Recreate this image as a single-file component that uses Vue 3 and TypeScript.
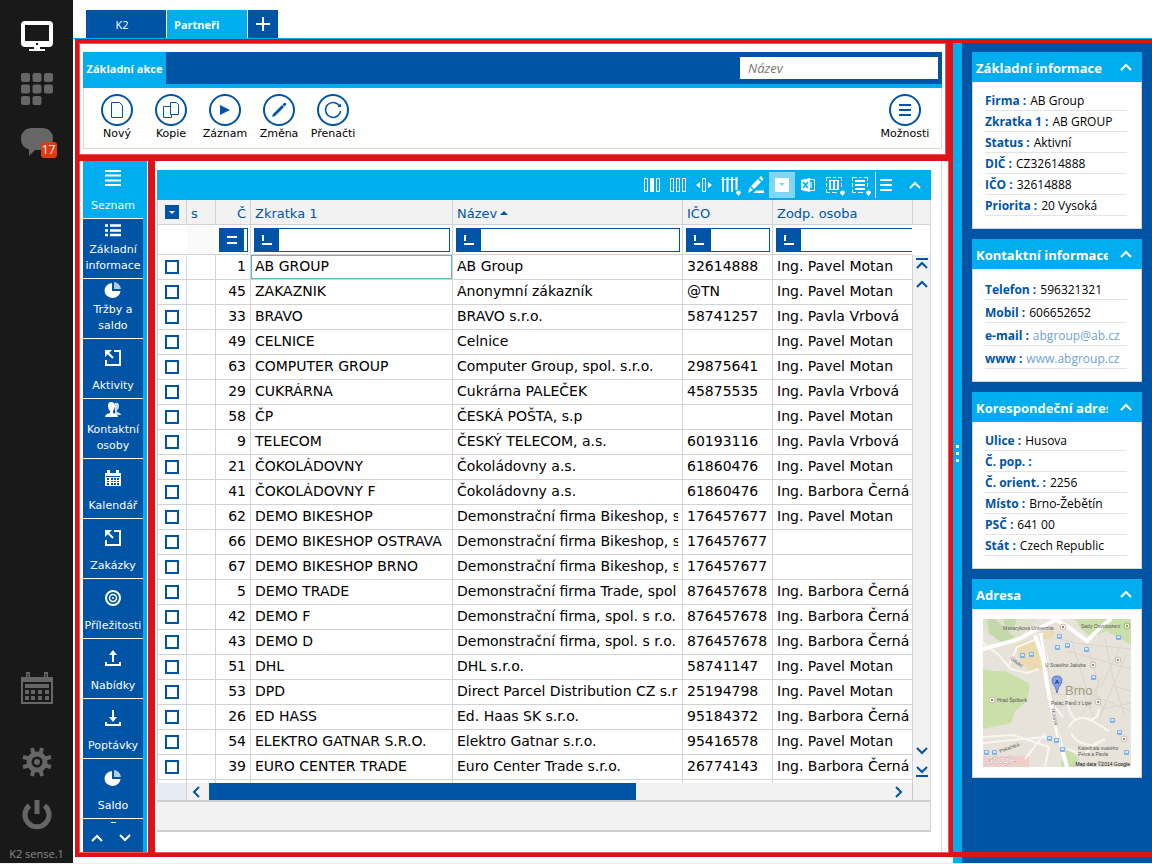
<script setup lang="ts">
import { h, ref } from 'vue'

interface Shape { d: string; w?: number; fill?: boolean; o?: number; c?: string }

const glyphs: Record<string, { size: [number, number]; shapes: Shape[] }> = {
  monitor: { size: [32, 31], shapes: [
    { d: 'M4 0H28Q32 0 32 4V22Q32 26 28 26H4Q0 26 0 22V4Q0 0 4 0ZM4 4V20H28V4ZM15 22V24H17V22ZM13 26H19V28H24V30H8V28H13Z', fill: true } ] },
  apps: { size: [32, 32], shapes: [
    { d: 'M2 0H7Q9 0 9 2V7Q9 9 7 9H2Q0 9 0 7V2Q0 0 2 0ZM13.500 0H18.500Q20.500 0 20.500 2V7Q20.500 9 18.500 9H13.500Q11.500 9 11.500 7V2Q11.500 0 13.500 0ZM25 0H30Q32 0 32 2V7Q32 9 30 9H25Q23 9 23 7V2Q23 0 25 0ZM2 11.500H7Q9 11.500 9 13.500V18.500Q9 20.500 7 20.500H2Q0 20.500 0 18.500V13.500Q0 11.500 2 11.500ZM13.500 11.500H18.500Q20.500 11.500 20.500 13.500V18.500Q20.500 20.500 18.500 20.500H13.500Q11.500 20.500 11.500 18.500V13.500Q11.500 11.500 13.500 11.500ZM25 11.500H30Q32 11.500 32 13.500V18.500Q32 20.500 30 20.500H25Q23 20.500 23 18.500V13.500Q23 11.500 25 11.500ZM2 23H7Q9 23 9 25V30Q9 32 7 32H2Q0 32 0 30V25Q0 23 2 23ZM13.500 23H18.500Q20.500 23 20.500 25V30Q20.500 32 18.500 32H13.500Q11.500 32 11.500 30V25Q11.500 23 13.500 23Z', fill: true } ] },
  chat: { size: [32, 28], shapes: [
    { d: 'M10 0H22Q32 1 32 11Q32 21 22 22H14L8 28V21.500Q0 19 0 11Q0 1 10 0Z', fill: true } ] },
  bigCalendar: { size: [32, 32], shapes: [
    { d: 'M1 6H31V31H1Z', w: 2 },
    { d: 'M0 5H32V10H0ZM4 12H28V16H4ZM4 18H8V22H4ZM10 18H14V22H10ZM17 18H21V22H17ZM24 18H28V22H24ZM4 24H8V28H4ZM10 24H14V28H10ZM17 24H21V28H17ZM24 24H28V28H24Z', fill: true },
    { d: 'M5 0H9V6H5ZM23 0H27V6H23Z', fill: true },
    { d: 'M7 2V5M25 2V5', w: 1, c: '#191919' } ] },
  gear: { size: [32, 32], shapes: [
    { d: 'M16 8A8 8 0 1 0 16 24A8 8 0 1 0 16 8', w: 5 },
    { d: 'M12.500 8L11 2M19.500 8L21 2M24 12.500L30 11M24 19.500L30 21M19.500 24L21 30M12.500 24L11 30M8 19.500L2 21M8 12.500L2 11', w: 4 },
    { d: 'M16 13A3 3 0 1 0 16 19A3 3 0 1 0 16 13', fill: true } ] },
  power: { size: [30, 32], shapes: [
    { d: 'M15 1V15', w: 5 }, { d: 'M7.500 6.500A12 12 0 1 0 22.500 6.500', w: 5 } ] },
  list: { size: [16, 16], shapes: [
    { d: 'M0 1H16M0 5.500H16M0 10.500H16M0 15H16', w: 2 } ] },
  bullets: { size: [16, 16], shapes: [
    { d: 'M0 3.500H3M0 8.500H3M0 13H3M5 3.500H16M5 8.500H16M5 13H16', w: 2.5 } ] },
  pie: { size: [16, 16], shapes: [
    { d: 'M7 1V9H15.500A8 7.500 0 1 1 7 1Z', fill: true },
    { d: 'M9 0Q15 1 16 7H9Z', fill: true, o: 0.7 } ] },
  launch: { size: [16, 16], shapes: [
    { d: 'M9 1H15V15H1V10M2 2L8 8', w: 2 }, { d: 'M0 0H7L0 7Z', fill: true } ] },
  people: { size: [16, 16], shapes: [
    { d: 'M10 1Q14 0 14 4Q14 7 12 8V10Q16 11 16 13H10Z', fill: true, o: 0.8 },
    { d: 'M6 0Q10 0 10 4Q10 7 8 9V11Q13 12 13 15H0Q0 12 5 11V9Q3 7 3 4Q3 0 6 0Z', fill: true } ] },
  calendar: { size: [16, 16], shapes: [
    { d: 'M0 3H2V0H5V3H11V0H14V3H16V16H0ZM1 6V7H15V6ZM2 8V10H4V8ZM6 8V10H8V8ZM9 8V10H11V8ZM12 8V10H14V8ZM2 11V12H4V11ZM6 11V12H8V11ZM9 11V12H11V11ZM12 11V12H14V11ZM2 13V15H4V13ZM6 13V15H8V13ZM9 13V15H11V13ZM12 13V15H14V13Z', fill: true } ] },
  target: { size: [16, 16], shapes: [
    { d: 'M8 1A7 7 0 1 0 8 15A7 7 0 1 0 8 1', w: 2 },
    { d: 'M8 4.500A3.500 3.500 0 1 0 8 11.500A3.500 3.500 0 1 0 8 4.500', w: 1.5 },
    { d: 'M8 7A1 1 0 1 0 8 9A1 1 0 1 0 8 7', fill: true } ] },
  upload: { size: [16, 16], shapes: [
    { d: 'M1 12V15H15V12M8 12V3', w: 2 }, { d: 'M8 0L12 5H4Z', fill: true } ] },
  download: { size: [16, 16], shapes: [
    { d: 'M1 12V15H15V12M8 0V8', w: 2 }, { d: 'M8 12L12 7H4Z', fill: true } ] },
  up: { size: [12, 8], shapes: [{ d: 'M1 7L6 2L11 7', w: 2 }] },
  down: { size: [12, 8], shapes: [{ d: 'M1 1L6 6L11 1', w: 2 }] },
  left: { size: [8, 12], shapes: [{ d: 'M7 1L2 6L7 11', w: 2 }] },
  right: { size: [8, 12], shapes: [{ d: 'M1 1L6 6L1 11', w: 2 }] },
  top: { size: [12, 12], shapes: [{ d: 'M0 1H12M1 10L6 5L11 10', w: 2 }] },
  bottom: { size: [12, 12], shapes: [{ d: 'M0 11H12M1 2L6 7L11 2', w: 2 }] },
  plus: { size: [14, 14], shapes: [{ d: 'M7 0V14M0 7H14', w: 2 }] },
  page: { size: [32, 32], shapes: [{ d: 'M10.500 8.500H18.500L21.500 11.500V23.500H10.500Z', w: 1 }] },
  copy: { size: [32, 32], shapes: [
    { d: 'M15.500 20.500V8.500H21.500L23.500 10.500V20.500ZM15.500 12.500H8.500V23.500H16.500V20.500', w: 1 } ] },
  play: { size: [32, 32], shapes: [{ d: 'M11 11L21 16L11 21Z', fill: true }] },
  pencil: { size: [32, 32], shapes: [{ d: 'M9 23L10 20L19 11L21 13L12 22ZM19.500 10.500L21 9H23V11L21.500 12.500Z', fill: true }] },
  reload: { size: [32, 32], shapes: [{ d: 'M22.500 12A7.500 7.500 0 1 0 23.500 17', w: 1.5 }, { d: 'M24 9.500V13H20.500Z', fill: true }] },
  menu: { size: [12, 12], shapes: [{ d: 'M0 1H12M0 6H12M0 11H12', w: 2 }] },
  starts: { size: [12, 12], shapes: [{ d: 'M2 1V7M1 10H11', w: 2 }] },
  equals: { size: [12, 12], shapes: [{ d: 'M1 3H11M1 9H11', w: 2 }] },
  caret: { size: [6, 3], shapes: [{ d: 'M0 0H6L3 3Z', fill: true }] },
  sort: { size: [8, 4], shapes: [{ d: 'M0 4L4 0L8 4Z', fill: true }] },
  cols1: { size: [20, 20], shapes: [
    { d: 'M2.500 3.500H5.500V16.500H2.500ZM14.500 3.500H17.500V16.500H14.500Z', w: 1 }, { d: 'M8 3H12V17H8Z', fill: true } ] },
  cols2: { size: [20, 20], shapes: [
    { d: 'M2.500 3.500H5.500V16.500H2.500ZM8.500 3.500H11.500V16.500H8.500ZM14.500 3.500H17.500V16.500H14.500Z', w: 1 } ] },
  fit: { size: [20, 20], shapes: [
    { d: 'M8.500 3.500H11.500V16.500H8.500Z', w: 1 }, { d: 'M6 7V13L2 10ZM14 7V13L18 10Z', fill: true } ] },
  rake: { size: [20, 20], shapes: [
    { d: 'M1 4.500H18', w: 1 }, { d: 'M3 2V17M7.500 2V17M12 2V17M16.500 2V15', w: 2 },
    { d: 'M16 18A2.500 2.500 0 1 1 21 18L18.500 21Z', fill: true } ] },
  edit: { size: [20, 20], shapes: [
    { d: 'M2 18L4 12L7 15ZM5 11L12 4L15 7L8 14ZM13 3L15 1L17.500 4L16 6ZM10 15.500H18V18H7.500Z', fill: true } ] },
  toggle: { size: [20, 20], shapes: [
    { d: 'M3 3H17V17H3Z', fill: true }, { d: 'M7 8H13L10 11Z', fill: true, c: '#80d6f7' } ] },
  excel: { size: [20, 20], shapes: [
    { d: 'M3 5L12 3V17L3 15Z', fill: true }, { d: 'M5 7L10 13M10 7L5 13', w: 1.5, c: '#00adef' },
    { d: 'M12 4.500H16.500V15.500H12', w: 1 }, { d: 'M12 7H14V13H12Z', fill: true, o: 0.6 } ] },
  selCols: { size: [20, 20], shapes: [
    { d: 'M2.500 6V2.500H7M9 2.500H12M14 2.500H17.500V6M17.500 8V12M2.500 8V12M2.500 14V17.500H6M8 17.500H13', w: 1 },
    { d: 'M6 6V15M10 6V15M14 6V15', w: 2 }, { d: 'M5 5.500H15M5 14.500H15', w: 1 }, { d: 'M16 18A2.500 2.500 0 1 1 21 18L18.500 21Z', fill: true } ] },
  selRows: { size: [20, 20], shapes: [
    { d: 'M2.500 6V2.500H7M9 2.500H12M14 2.500H17.500V6M17.500 8V12M2.500 8V12M2.500 14V17.500H6M8 17.500H13', w: 1 },
    { d: 'M5 6H15M5 10H15M5 14H15', w: 2 }, { d: 'M16 18A2.500 2.500 0 1 1 21 18L18.500 21Z', fill: true } ] },
}

const Glyph = (props: { name: string }) => {
  const g = glyphs[props.name]
  return h('svg', { width: g.size[0], height: g.size[1], viewBox: `0 0 ${g.size[0]} ${g.size[1]}`, class: 'glyph', 'aria-hidden': 'true' },
    g.shapes.map(s => h('path', s.fill
      ? { d: s.d, fill: s.c ?? 'currentColor', 'fill-rule': 'evenodd', opacity: s.o ?? 1 }
      : { d: s.d, fill: 'none', stroke: s.c ?? 'currentColor', 'stroke-width': s.w })))
}
Glyph.props = ['name']

const actions = [
  { icon: 'page', label: 'Nový' }, { icon: 'copy', label: 'Kopie' }, { icon: 'play', label: 'Záznam' },
  { icon: 'pencil', label: 'Změna' }, { icon: 'reload', label: 'Přenačti' },
]

const pages = [
  { icon: 'list', lines: ['Seznam'] }, { icon: 'bullets', lines: ['Základní', 'informace'] },
  { icon: 'pie', lines: ['Tržby a', 'saldo'] }, { icon: 'launch', lines: ['Aktivity'] },
  { icon: 'people', lines: ['Kontaktní', 'osoby'] }, { icon: 'calendar', lines: ['Kalendář'] },
  { icon: 'launch', lines: ['Zakázky'] }, { icon: 'target', lines: ['Příležitosti'] },
  { icon: 'upload', lines: ['Nabídky'] }, { icon: 'download', lines: ['Poptávky'] }, { icon: 'pie', lines: ['Saldo'] },
]

const tools = ['cols1', 'cols2', 'fit', 'rake', 'edit', 'toggle', 'excel', 'selCols', 'selRows']

const P = 'Ing. Pavel Motan'
const V = 'Ing. Pavla Vrbová'
const B = 'Ing. Barbora Černá'
const rows: [number, string, string, string, string][] = [
  [1, 'AB GROUP', 'AB Group', '32614888', P],
  [45, 'ZAKAZNIK', 'Anonymní zákazník', '@TN', P],
  [33, 'BRAVO', 'BRAVO s.r.o.', '58741257', V],
  [49, 'CELNICE', 'Celnice', '', P],
  [63, 'COMPUTER GROUP', 'Computer Group, spol. s.r.o.', '29875641', P],
  [29, 'CUKRÁRNA', 'Cukrárna PALEČEK', '45875535', V],
  [58, 'ČP', 'ČESKÁ POŠTA, s.p', '', P],
  [9, 'TELECOM', 'ČESKÝ TELECOM, a.s.', '60193116', V],
  [21, 'ČOKOLÁDOVNY', 'Čokoládovny a.s.', '61860476', P],
  [41, 'ČOKOLÁDOVNY F', 'Čokoládovny a.s.', '61860476', B],
  [62, 'DEMO BIKESHOP', 'Demonstrační firma Bikeshop, s', '176457677', P],
  [66, 'DEMO BIKESHOP OSTRAVA', 'Demonstrační firma Bikeshop, s', '176457677', ''],
  [67, 'DEMO BIKESHOP BRNO', 'Demonstrační firma Bikeshop, s', '176457677', ''],
  [5, 'DEMO TRADE', 'Demonstrační firma Trade, spol', '876457678', B],
  [42, 'DEMO F', 'Demonstrační firma, spol. s r.o.', '876457678', B],
  [43, 'DEMO D', 'Demonstrační firma, spol. s r.o.', '876457678', B],
  [51, 'DHL', 'DHL s.r.o.', '58741147', P],
  [53, 'DPD', 'Direct Parcel Distribution CZ s.r', '25194798', P],
  [26, 'ED HASS', 'Ed. Haas SK s.r.o.', '95184372', B],
  [54, 'ELEKTRO GATNAR S.R.O.', 'Elektro Gatnar s.r.o.', '95416578', P],
  [39, 'EURO CENTER TRADE', 'Euro Center Trade s.r.o.', '26774143', B],
]
const scroll = ref({ start: 0, length: 63 })

const cards: { title: string; roomy?: boolean; items: { k: string; v: string; href?: string }[] }[] = [
  { title: 'Základní informace', items: [
    { k: 'Firma', v: 'AB Group' }, { k: 'Zkratka 1', v: 'AB GROUP' }, { k: 'Status', v: 'Aktivní' },
    { k: 'DIČ', v: 'CZ32614888' }, { k: 'IČO', v: '32614888' }, { k: 'Priorita', v: '20 Vysoká' } ] },
  { title: 'Kontaktní informace', roomy: true, items: [
    { k: 'Telefon', v: '596321321' }, { k: 'Mobil', v: '606652652' },
    { k: 'e-mail', v: 'abgroup@ab.cz', href: 'mailto:abgroup@ab.cz' },
    { k: 'www', v: 'www.abgroup.cz', href: 'http://www.abgroup.cz' } ] },
  { title: 'Korespondeční adresa', items: [
    { k: 'Ulice', v: 'Husova' }, { k: 'Č. pop.', v: '' }, { k: 'Č. orient.', v: '2256' },
    { k: 'Místo', v: 'Brno-Žebětín' }, { k: 'PSČ', v: '641 00' }, { k: 'Stát', v: 'Czech Republic' } ] },
]

const stops = [[76, 17], [74, 28], [84, 26], [103, 30], [39, 36], [48, 35], [110, 58], [135, 18], [129, 101], [136, 113], [66, 119], [73, 121], [3, 133], [11, 133], [79, 130], [143, 133]]
const places = [[80, 8], [110, 46], [9, 81], [115, 83], [135, 41], [141, 120]]
</script>

<template>
  <div class="app">
    <nav class="rail" aria-label="Hlavní panel">
      <button class="rail-btn on" aria-label="Plocha"><Glyph name="monitor" /></button>
      <button class="rail-btn apps" aria-label="Aplikace"><Glyph name="apps" /></button>
      <button class="rail-btn chat" aria-label="Zprávy"><Glyph name="chat" /><span class="badge">17</span></button>
      <div class="rail-end">
        <button class="rail-btn" aria-label="Kalendář"><Glyph name="bigCalendar" /></button>
        <button class="rail-btn gear" aria-label="Nastavení"><Glyph name="gear" /></button>
        <button class="rail-btn power" aria-label="Konec"><Glyph name="power" /></button>
        <div class="version">K2 sense.1</div>
      </div>
    </nav>

    <div class="main">
      <header class="tabs">
        <button class="tab">K2</button>
        <button class="tab current">Partneři</button>
        <button class="tab add" aria-label="Nová záložka"><Glyph name="plus" /></button>
      </header>

      <div class="workspace">
        <section class="ribbon-frame">
          <div class="ribbon">
            <div class="ribbon-head">
              <button class="ribbon-tab">Základní akce</button>
              <input class="search" type="text" placeholder="Název" aria-label="Název" />
            </div>
            <div class="ribbon-body">
              <button v-for="a in actions" :key="a.label" class="action">
                <span class="circle"><Glyph :name="a.icon" /></span>{{ a.label }}
              </button>
              <button class="action last"><span class="circle"><Glyph name="menu" /></span>Možnosti</button>
            </div>
          </div>
        </section>

        <section class="pages-frame">
          <div class="pages">
            <div class="page-list">
              <button v-for="(p, i) in pages" :key="i" class="page" :class="{ active: i === 0, double: p.lines.length > 1 }">
                <Glyph :name="p.icon" />
                <span class="page-label"><span v-for="l in p.lines" :key="l">{{ l }}</span></span>
              </button>
              <div class="page-more"></div>
            </div>
            <div class="page-scroll">
              <button aria-label="Nahoru"><Glyph name="up" /></button>
              <button aria-label="Dolů"><Glyph name="down" /></button>
            </div>
          </div>
        </section>

        <section class="grid-frame">
          <div class="grid-panel">
            <div class="grid">
              <div class="toolbar">
                <button v-for="t in tools" :key="t" class="tool" :class="{ pressed: t === 'toggle' }" :aria-label="t"><Glyph :name="t" /></button>
                <button class="tool divided" aria-label="Menu"><Glyph name="menu" /></button>
                <button class="tool collapse" aria-label="Sbalit"><Glyph name="up" /></button>
              </div>
              <div class="table-area">
                <div class="table-clip">
                  <table>
                    <colgroup>
                      <col class="c-check" /><col class="c-s" /><col class="c-no" /><col class="c-code" /><col class="c-name" /><col class="c-id" /><col />
                    </colgroup>
                    <thead>
                      <tr class="head">
                        <th><button class="drop" aria-label="Výběr"><Glyph name="caret" /></button></th>
                        <th>s</th><th class="num">Č</th><th>Zkratka 1</th>
                        <th>Název <Glyph name="sort" /></th><th>IČO</th><th>Zodp. osoba</th>
                      </tr>
                      <tr class="filters">
                        <td></td><td class="shade"></td>
                        <td v-for="(f, i) in ['Č', 'Zkratka 1', 'Název', 'IČO', 'Zodp. osoba']" :key="f">
                          <div class="filter" :class="{ open: i === 4 }">
                            <button :aria-label="'Podmínka ' + f"><Glyph :name="i ? 'starts' : 'equals'" /></button>
                            <input type="text" :aria-label="'Filtr ' + f" />
                          </div>
                        </td>
                      </tr>
                    </thead>
                    <tbody>
                      <tr v-for="(r, i) in rows" :key="r[0]">
                        <td><input type="checkbox" class="tick" :aria-label="r[1]" /></td>
                        <td></td>
                        <td class="num"><div>{{ r[0] }}</div></td>
                        <td :class="{ focus: i === 0 }"><div>{{ r[1] }}</div></td>
                        <td><div>{{ r[2] }}</div></td>
                        <td><div>{{ r[3] }}</div></td>
                        <td class="wide"><div>{{ r[4] }}</div></td>
                      </tr>
                      <tr><td v-for="n in 7" :key="n"></td></tr>
                    </tbody>
                  </table>
                </div>
                <div class="vside">
                  <div class="vhead"></div>
                  <div class="vfilter"></div>
                  <div class="vbar">
                    <button aria-label="Začátek"><Glyph name="top" /></button>
                    <button aria-label="Výš"><Glyph name="up" /></button>
                    <button class="push" aria-label="Níž"><Glyph name="down" /></button>
                    <button aria-label="Konec"><Glyph name="bottom" /></button>
                  </div>
                </div>
              </div>
              <div class="hbar">
                <div class="hcorner"></div>
                <button aria-label="Vlevo"><Glyph name="left" /></button>
                <div class="track"><div class="thumb" :style="{ width: scroll.length + '%' }"></div></div>
                <button class="to-right" aria-label="Vpravo"><Glyph name="right" /></button>
                <div class="hend"></div>
              </div>
              <div class="status"></div>
            </div>
          </div>
        </section>
      </div>

      <div class="strip"><i></i><i></i><i></i></div>

      <aside class="side">
        <div class="side-body">
          <section v-for="c in cards" :key="c.title" class="card">
            <header><h2>{{ c.title }}</h2><button :aria-label="'Sbalit ' + c.title"><Glyph name="up" /></button></header>
            <dl :class="{ roomy: c.roomy }">
              <div v-for="it in c.items" :key="it.k">
                <dt>{{ it.k }} :</dt>
                <dd><a v-if="it.href" :href="it.href">{{ it.v }}</a><template v-else>{{ it.v }}</template></dd>
              </div>
            </dl>
          </section>
          <section class="card">
            <header><h2>Adresa</h2><button aria-label="Sbalit Adresa"><Glyph name="up" /></button></header>
            <div class="map">
              <svg width="148" height="148" viewBox="0 0 148 148" role="img" aria-label="Brno">
                <rect width="148" height="148" fill="#e8e3da" />
                <path d="M0 0H54L30 24L20 26L0 10Z" fill="#dde2cc" />
                <path d="M4 0H12L32 18L22 26L6 14Z" fill="#c3d9ac" />
                <path d="M20 0H34L30 10L22 6Z" fill="#c3d9ac" />
                <path d="M0 50Q12 53 22 52L46 64Q47 76 42 84L32 92L28 104L0 110Z" fill="#cadfaa" />
                <path d="M92 0H148V26L124 12L108 18L98 10Z" fill="#cadfaa" />
                <path d="M80 134L86 130L96 140L92 148H78Z" fill="#cadfaa" />
                <path d="M34 24L52 20L58 40L65 44L62 50L46 52L36 40Z" fill="#eadbb0" />
                <path d="M58 12H72L68 20H58Z" fill="#eadbb0" />
                <path d="M0 137H46V148H0Z" fill="#f0cfca" />
                <g fill="none" stroke="#dad5ca" stroke-width="1">
                  <path d="M84 32L148 50M76 62L148 92M88 20L104 72M102 18L116 66L106 90M122 20L130 60L142 98M138 26L118 68M96 66L112 100M118 60L98 96M62 74L86 76M66 90L98 82M78 20L92 24L148 30M128 66L148 72M112 70L120 90L148 84M144 34L128 72L116 100" />
                </g>
                <g fill="none" stroke="#f8f6f1" stroke-width="2">
                  <path d="M0 24L16 36L28 50L44 54L56 50M54 20L34 28L26 46M0 118L30 116L66 128M0 124L40 120L64 118M42 140L62 114M66 128L62 148M84 130L100 136L116 124M70 86L80 98M86 74Q82 90 92 100M86 108Q92 96 106 100L126 112M88 114Q94 126 110 126L122 120M106 102L114 98L116 90" />
                </g>
                <g fill="none" stroke="#fff" stroke-width="4">
                  <path d="M0 30L36 20L74 0M52 16L60 40L66 76L74 112L84 148M72 0L88 10L104 22L116 10L128 0" />
                  <path d="M58 14L64 46" />
                </g>
                <path d="M60 16L68 68L78 128" fill="none" stroke="#ddd6c9" stroke-width="1" />
                <g v-for="(s, i) in stops" :key="'s' + i">
                  <rect :x="s[0] - 2" :y="s[1] - 2" width="5" height="5" rx="1" fill="#7db3ea" />
                  <rect :x="s[0] - 1" :y="s[1] - 1" width="3" height="2" fill="#d6e7fa" />
                </g>
                <g v-for="(p, i) in places" :key="'p' + i">
                  <circle :cx="p[0]" :cy="p[1]" r="3" fill="#f7f3ee" stroke="#c9bdb2" stroke-width="1" />
                  <circle :cx="p[0]" :cy="p[1]" r="1" fill="#8a5a40" />
                </g>
                <circle cx="144" cy="7" r="3" fill="#eef6dd" stroke="#98ab78" /><circle cx="144" cy="7" r="1" fill="#4aa000" />
                <path d="M74 74Q73 68 70 65Q67 57 74 57Q81 57 78 65Q75 68 74 74Z" fill="#7f9fef" stroke="#5a78c4" stroke-width="1" />
                <text x="72" y="65" class="pin">A</text>
                <g class="labels">
                  <text x="20" y="11">Masarykova Univerzita</text>
                  <text x="98" y="9">Sady Osvobození</text>
                  <text x="62" y="48">U Svatého Jakuba</text>
                  <text x="14" y="83">Hrad Špilberk</text>
                  <text x="68" y="86">Palác Pánů z Lipé</text>
                  <text x="95" y="131">Katedrála svatého</text>
                  <text x="95" y="137">Petra a Pavla</text>
                  <text transform="translate(27 40) rotate(38)">Údolní</text>
                  <text transform="translate(68 90) rotate(78)">Husova</text>
                  <text transform="translate(17 134) rotate(-20)">Pekařská</text>
                </g>
                <text x="82" y="76" class="town">Brno</text>
                <text x="3" y="144" class="brand">Google</text>
                <text x="147" y="147" class="credit">Map data ©2014 Google</text>
              </svg>
            </div>
          </section>
        </div>
      </aside>
    </div>
  </div>
</template>

<style>
body { margin: 0; }
</style>

<style scoped>
.app {
  --blue: #0054a6;
  --cyan: #00adef;
  --red: #df1218;
  --red-soft: #e8575b;
  --line: #d0d3d6;
  --grey: #f2f2f2;
  display: grid;
  grid-template-columns: 73px minmax(0, 1fr);
  grid-template-rows: minmax(0, 1fr);
  height: 100vh;
  min-height: 640px;
  box-sizing: border-box;
  border-bottom: 1px solid #eee;
  background: #fff;
  font-family: "DejaVu Sans", sans-serif;
  font-size: 11px;
}
.app *, .app *::before { box-sizing: border-box; }
button { border: 0; padding: 0; margin: 0; background: none; font: inherit; color: inherit; cursor: pointer; }
.glyph { display: block; flex: none; overflow: visible; }

/* left rail */
.rail { background: #191919; display: flex; flex-direction: column; align-items: center; padding-top: 21px; color: #666; }
.rail-btn { display: block; }
.rail-btn.on { color: #fff; }
.rail-btn.apps { margin-top: 21px; }
.rail-btn.chat { margin-top: 23px; position: relative; }
.badge { position: absolute; left: 20px; top: 14px; width: 16px; height: 16px; border-radius: 3px; background: #df3a10; color: #fff; font: 12px/16px "Open Sans", sans-serif; text-align: center; }
.rail-end { margin-top: auto; display: flex; flex-direction: column; align-items: center; }
.gear { margin-top: 42px; }
.power { margin-top: 21px; }
.version { margin-top: 14px; height: 18px; font: 11px/18px "Open Sans", sans-serif; color: #8a8a8a; }

/* main layout */
.main { display: grid; grid-template-columns: minmax(0, 1fr) 9px 190px; grid-template-rows: 39px minmax(0, 1fr); }
.tabs { grid-column: 1 / -1; display: flex; align-items: flex-end; gap: 1px; padding-left: 13px; border-bottom: 1px solid var(--cyan); font-family: "Open Sans", sans-serif; }
.tab { width: 80px; height: 28px; padding-right: 8px; background: var(--blue); color: #fff; text-align: center; }
.tab.current { background: var(--cyan); font-weight: 700; text-align: left; padding-left: 7px; }
.tab.add { width: 30px; padding: 0; display: grid; place-items: center; }

.workspace { display: grid; grid-template-columns: 80px minmax(0, 1fr); grid-template-rows: 122px minmax(0, 1fr); margin: 0 0 6px 2px; }
.ribbon-frame { grid-column: 1 / -1; border: solid var(--red); border-width: 4px 7px 6px 4px; box-shadow: inset 0 0 0 1px var(--red-soft); padding: 9px 4px 5px; }
.ribbon { height: 97px; }
.ribbon-head { display: flex; justify-content: space-between; align-items: flex-start; height: 36px; background: var(--blue); border-bottom: 4px solid var(--cyan); }
.ribbon-tab { width: 83px; height: 32px; background: var(--cyan); color: #fff; font: 700 11px "Open Sans", sans-serif; white-space: nowrap; }
.search { width: 198px; height: 22px; margin: 5px 4px 0 0; border: 0; padding: 0 8px; background: #fff; font: italic 13px "Open Sans", sans-serif; outline: 0; }
.search::placeholder { color: #777; opacity: 1; }
.ribbon-body { display: flex; height: 61px; padding: 6px 9px 0 6px; border: solid #d9d9d9; border-width: 0 1px 1px; }
.action { width: 54px; display: flex; flex-direction: column; align-items: center; color: #000; line-height: 16px; white-space: nowrap; }
.action.last { margin-left: auto; }
.circle { width: 32px; height: 32px; border-radius: 50%; box-shadow: inset 0 0 0 2px var(--blue); color: var(--blue); display: grid; place-items: center; }

/* page navigation */
.pages-frame { border: solid var(--red); border-width: 0 7px 4px 4px; box-shadow: inset 1px -1px 0 0 var(--red-soft); padding: 0 1px 1px 4px; min-height: 0; }
.pages { height: 100%; display: flex; flex-direction: column; background: var(--blue); border-right: 4px solid var(--cyan); color: #fff; }
.page-list { flex: 1; min-height: 0; overflow: hidden; }
.page { width: 100%; height: 60px; display: flex; flex-direction: column; justify-content: space-between; align-items: center; padding: 11px 0 4px; border-bottom: 1px solid #fff; line-height: 16px; }
.page.double { padding-top: 3px; }
.page.active { height: 58px; padding-top: 9px; background: var(--cyan); }
.page-label { display: flex; flex-direction: column; align-items: center; white-space: nowrap; }
.page-more { width: 5px; height: 1px; margin: 3px auto 0; background: #fff; }
.page-scroll { height: 28px; display: flex; justify-content: center; gap: 16px; padding-right: 4px; color: #fff; align-items: center; }

/* data grid */
.grid-frame { border: solid var(--red); border-width: 0 4px 4px 0; box-shadow: inset -1px -1px 0 0 var(--red-soft); padding: 0 7px 1px 0; min-height: 0; }
.grid-panel { height: 100%; padding: 9px 10px 20px 2px; border-right: 1px solid #d9d9d9; }
.grid { height: 100%; display: flex; flex-direction: column; }
.toolbar { flex: none; height: 30px; display: flex; justify-content: flex-end; align-items: center; padding-right: 3px; background: var(--cyan); color: #fff; }
.tool { width: 26px; height: 26px; display: grid; place-items: center; }
.tool.pressed { background: #80d6f7; }
.tool.divided { box-shadow: -1px 0 0 #fff; margin-left: 3px; width: 23px; padding-right: 3px; }
.tool.collapse { margin-left: 3px; }
.table-area { flex: 1; min-height: 0; display: flex; }
.table-clip { flex: 1; min-width: 0; overflow: hidden; border-left: 1px solid var(--line); }
table { width: 100%; table-layout: fixed; border-collapse: separate; border-spacing: 0; font-size: 14px; }
.c-check, .c-s { width: 29px; }
.c-no { width: 35px; }
.c-code { width: 202px; }
.c-name { width: 230px; }
.c-id { width: 90px; }
th, td { height: 25px; padding: 0 4px; border: solid var(--line); border-width: 0 1px 1px 0; text-align: left; line-height: 22px; white-space: nowrap; overflow: hidden; color: #000; }
td > div { overflow: hidden; height: 24px; }
td.wide { padding-right: 0; }
.num { text-align: right; }
.head th { background: var(--grey); color: var(--blue); font-size: 13px; line-height: 20px; font-weight: 400; padding-top: 4px; }
.head th .glyph { display: inline-block; vertical-align: 3px; margin-left: -1px; }
.drop { display: grid; place-items: center; width: 14px; height: 14px; margin: 0 auto; background: var(--blue); color: #fff; }
.drop .glyph { display: block; margin: 0; }
.filters td { height: 30px; padding: 0 2px 0 3px; }
.filters td:first-child, .filters td.shade { border-right-color: #fff; }
.filters td.shade { background: #fafafa; }
.filters td:last-child { padding-right: 0; border-right-color: #fff; }
td > .filter { display: flex; height: 24px; border: 1px solid var(--blue); }
td > .filter.open { border-right: 0; }
.filter button { flex: none; width: 24px; background: var(--blue); color: #fff; display: grid; place-items: center; }
.filter input { flex: 1; min-width: 0; width: 0; border: 0; padding: 0; font: inherit; outline: 0; }
.tick { appearance: none; display: block; width: 14px; height: 14px; margin: 0 auto; border: 2px solid var(--blue); background: #fff; }
td.focus { box-shadow: inset 0 0 0 1px #62b5c4; }
.head th:first-child, tbody td:first-child { padding: 0; }

.vside { width: 18px; display: flex; flex-direction: column; border-right: 1px solid #d9d9d9; }
.vhead { height: 25px; background: var(--grey); border-bottom: 1px solid var(--line); }
.vfilter { height: 30px; }
.vbar { flex: 1; display: flex; flex-direction: column; align-items: center; gap: 10px; padding: 3px 0 6px; background: var(--grey); color: var(--blue); }
.vbar .push { margin-top: auto; }
.hbar { flex: none; height: 17px; display: flex; background: var(--grey); color: var(--blue); }
.hbar button { width: 22px; display: grid; place-items: center; padding-right: 4px; }
.hcorner { width: 30px; background: #e6ebf4; border-right: 1px solid var(--line); }
.track { flex: 1; display: flex; }
.thumb { background: var(--blue); }
.hbar .to-right { width: 26px; border-right: 1px solid #c8c8c8; padding-right: 2px; }
.hend { width: 18px; border-right: 1px solid #d9d9d9; }
.status { flex: none; height: 32px; background: var(--grey); border: solid #d0d0d0; border-width: 2px 1px 2px 0; }

/* side panel */
.strip { border-top: 4px solid var(--red); background: linear-gradient(var(--red), var(--red)) 0 calc(100% - 6px) / 100% 5px no-repeat var(--cyan); display: flex; flex-direction: column; align-items: center; justify-content: center; gap: 4px; }
.strip i { width: 3px; height: 3px; background: #fff; }
.side { border-top: 4px solid var(--red); padding-bottom: 6px; background: var(--blue); min-height: 0; }
.side-body { height: 100%; display: flex; flex-direction: column; gap: 10px; padding: 9px 10px 0; border-bottom: 5px solid var(--red); overflow: hidden; font-family: "Open Sans", sans-serif; }
.card { flex: none; background: #fff; border: solid #d4d8dc; border-width: 0 1px 1px; }
.card header { display: flex; align-items: center; justify-content: space-between; height: 30px; margin: 0 -1px; padding: 0 10px 0 4px; background: var(--cyan); color: #fff; }
h2 { margin: 0; width: 132px; overflow: hidden; white-space: nowrap; font-size: 13px; line-height: 30px; font-weight: 700; padding-top: 2px; }
dl { margin: 0; padding: 8px 14px 12px 12px; font-size: 12px; }
dl > div { display: flex; gap: 4px; height: 21px; border-bottom: 1px solid #e4e4e4; line-height: 21px; white-space: nowrap; }
dl.roomy > div { height: 23px; line-height: 26px; }
dt { color: var(--blue); font-weight: 700; }
dd { margin: 0; color: #000; }
a { color: #6fa3d6; text-decoration: none; }
.map { padding: 10px; }
.map svg { display: block; }
.map text { font-family: "Liberation Sans", sans-serif; font-size: 5px; fill: #555; }
.map .labels text { font-size: 5px; }
.map .town { font-size: 13px; fill: #a39a80; }
.map .brand { font-size: 9px; fill: #fff; stroke: #c9a9a6; stroke-width: 1px; paint-order: stroke; }
.map .credit { fill: #000; text-anchor: end; }
.map .pin { font-size: 6px; fill: #000; }
</style>
